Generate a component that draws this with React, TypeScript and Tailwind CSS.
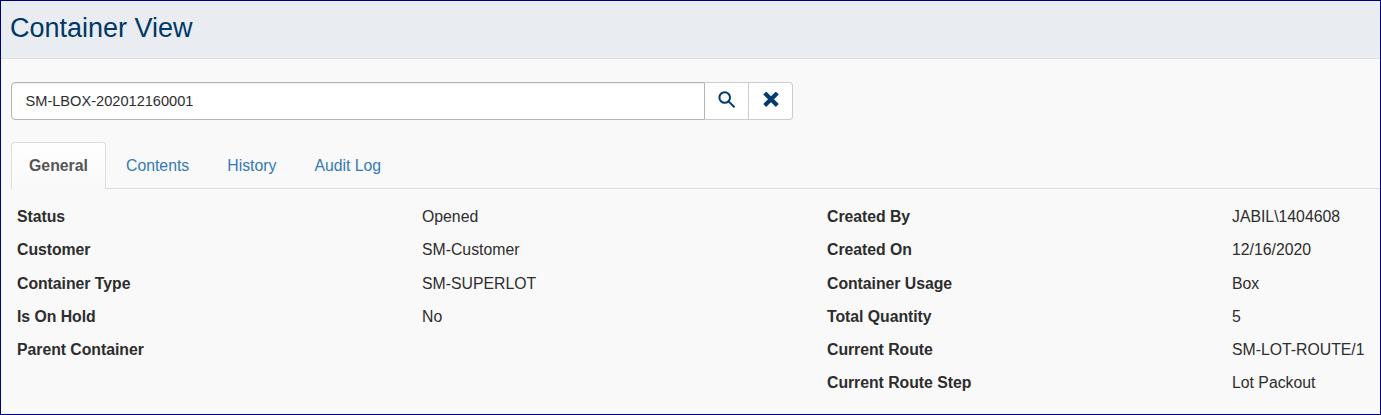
import React from "react";

const left = [
  ["Status", "Opened"],
  ["Customer", "SM-Customer"],
  ["Container Type", "SM-SUPERLOT"],
  ["Is On Hold", "No"],
  ["Parent Container", ""],
];
const right = [
  ["Created By", "JABIL\\1404608"],
  ["Created On", "12/16/2020"],
  ["Container Usage", "Box"],
  ["Total Quantity", "5"],
  ["Current Route", "SM-LOT-ROUTE/1"],
  ["Current Route Step", "Lot Packout"],
];

function Fields({ rows }: { rows: string[][] }) {
  return (
    <dl className="w-[810px] shrink-0">
      {rows.map(([label, value]) => (
        <div key={label} className="flex h-[33px] items-center nth-3:h-[34px] nth-3:pt-px">
          <dt className="w-[405px] font-bold tracking-[-0.03px]">{label}</dt>
          <dd className="whitespace-nowrap">{value}</dd>
        </div>
      ))}
    </dl>
  );
}

export default function App() {
  return (
    <div className="h-[415px] w-full overflow-hidden border border-[#000080] bg-[#f9f9f9] font-['Liberation_Sans',Arial,sans-serif] text-[15.8px] leading-6 text-[#2d2d2d]">
      <header className="flex h-[58px] items-center border-b border-[#dcdfe6] bg-[#e9ecf1] pl-[9px]">
        <h1 className="pb-1 text-[27px] leading-8 text-[#003865]">Container View</h1>
      </header>
      <div className="mt-[23px] ml-[10px] flex h-[38px] w-[782px]">
        <input
          className="w-[694px] rounded-l border border-[#b5b5b5] bg-white pr-3 pl-[13.5px] text-[14.6px] shadow-[inset_0_1px_1px_rgba(0,0,0,0.075)] outline-none"
          defaultValue="SM-LBOX-202012160001"
        />
        <button aria-label="Search" className="flex w-11 items-center justify-center border-y border-r border-[#ccc] bg-white pb-[3px]">
          <svg width="18" height="18" viewBox="0 0 18 18" fill="none" stroke="#003c71" strokeWidth="2">
            <circle cx="6.7" cy="6.5" r="5.3" />
            <path d="M10.5 10.4l6 5.8" />
          </svg>
        </button>
        <button aria-label="Clear" className="flex w-11 items-center justify-center rounded-r border-y border-r border-[#ccc] bg-white pb-[3px]">
          <svg width="16" height="16" viewBox="0 0 16 16" stroke="#003c71" strokeWidth="4.2" strokeLinecap="square">
            <path d="M3.2 2.5l9.6 9.6M12.8 2.5L3.2 12.1" />
          </svg>
        </button>
      </div>
      <nav className="mt-[22px] ml-[10px] flex h-[47px] border-b border-[#ddd] text-[#337ab7]">
        <a className="-mb-px flex w-[95px] items-center justify-center rounded-t border border-b-0 border-[#ddd] bg-linear-to-b from-white to-[#f9f9f9] font-bold text-[#555]">General</a>
        <a className="ml-5 flex items-center pt-px">Contents</a>
        <a className="ml-[38px] flex items-center pt-px">History</a>
        <a className="ml-[38px] flex items-center pt-px">Audit Log</a>
      </nav>
      <main className="mt-[11.5px] ml-4 flex">
        <Fields rows={left} />
        <Fields rows={right} />
      </main>
    </div>
  );
}
